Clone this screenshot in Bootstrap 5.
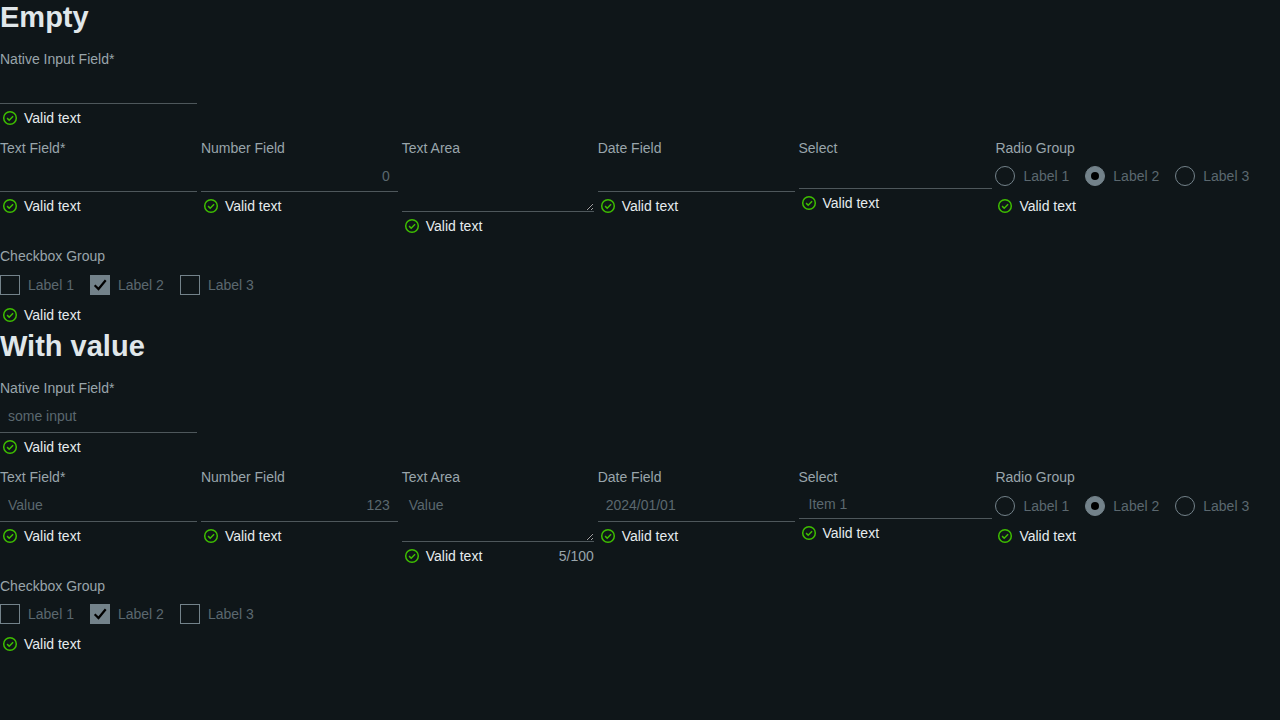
<!DOCTYPE html>
<html lang="en" data-bs-theme="dark">
<head>
<meta charset="utf-8">
<title>Form fields</title>
<link rel="stylesheet" href="https://cdn.jsdelivr.net/npm/bootstrap@5.3.0/dist/css/bootstrap.min.css">
<style>
body{background:#0f1619;font:14px/18px "Liberation Sans",Arial,sans-serif;color:#99a5ab}
.form-part{height:329.49px}
.form-part h1{font-size:29px;line-height:34px;font-weight:700;color:#e0e7ea;margin:0 0 15.5px}
.fields{gap:3.89px}
.first-field{height:89px}
.main-fields{height:108.6px}
.field-label{display:block;height:18px;white-space:nowrap}
.form-control,.form-control:disabled{display:block;width:197px;height:35.6px;min-height:0;padding:10px 8px 6.6px;border:0;border-bottom:1px solid #4e575b;border-radius:0;background:transparent;color:#5b686f;font:inherit;line-height:18px;opacity:1}
.first-field .form-control{height:36.5px;padding-bottom:7.5px}
.first-field .helper{margin-top:3.5px}
textarea.form-control,textarea.form-control:disabled{width:192px;height:55.6px;padding:10px 7px 8px;color-scheme:dark;resize:both}
.select-box{width:193px;height:32.6px;padding:9px 10px 0;border-bottom:1px solid #4e575b;color:#5b686f}
.helper{height:20px;line-height:20px;margin-top:4px;color:#e6ecee;white-space:nowrap}
.helper svg{width:20px;height:20px;margin-right:4px;flex:none}
.counter{color:#99a5ab}
.choices{gap:16px;margin-top:9.6px;height:20px;line-height:20px;color:#5b686f;white-space:nowrap}
.choices+.helper{margin-top:10px}
.choice{gap:8px;width:73.95px}
.mark-box{width:20px;height:20px;flex:none;border:1px solid #73828a}
.mark-box svg{display:block;width:18px;height:18px}
.round{border-radius:50%}
.picked{background:#73828a}
</style>
</head>
<body>
<svg class="d-none"><symbol id="ok" viewBox="0 0 20 20"><circle cx="10" cy="10" r="6.3" fill="none" stroke="#3ebe00" stroke-width="1.5"/><path d="M7.1 10.1 9.2 12.2 13.1 8.2" fill="none" stroke="#3ebe00" stroke-width="1.5"/></symbol></svg>

<section class="form-part">
  <h1>Empty</h1>
  <div class="first-field"><label class="field-label">Native Input Field*</label><input class="form-control" disabled><div class="helper d-flex"><svg><use href="#ok"/></svg>Valid text</div></div>
  <div class="fields main-fields d-flex align-items-start">
    <div><label class="field-label">Text Field*</label><input class="form-control" disabled><div class="helper d-flex"><svg><use href="#ok"/></svg>Valid text</div></div>
    <div><label class="field-label">Number Field</label><input class="form-control text-end" inputmode="numeric" value="0" disabled><div class="helper d-flex"><svg><use href="#ok"/></svg>Valid text</div></div>
    <div><label class="field-label">Text Area</label><textarea class="form-control" disabled></textarea><div class="helper d-flex"><svg><use href="#ok"/></svg>Valid text</div></div>
    <div><label class="field-label">Date Field</label><input class="form-control" disabled><div class="helper d-flex"><svg><use href="#ok"/></svg>Valid text</div></div>
    <div><label class="field-label">Select</label><div class="select-box"></div><div class="helper d-flex"><svg><use href="#ok"/></svg>Valid text</div></div>
    <div><label class="field-label">Radio Group</label>
      <div class="choices d-flex"><div class="choice d-flex"><span class="mark-box round"></span>Label 1</div><div class="choice d-flex"><span class="mark-box round picked"><svg viewBox="0 0 18 18"><circle cx="9" cy="9" r="4"/></svg></span>Label 2</div><div class="choice d-flex"><span class="mark-box round"></span>Label 3</div></div>
      <div class="helper d-flex"><svg><use href="#ok"/></svg>Valid text</div></div>
  </div>
  <div><label class="field-label">Checkbox Group</label>
    <div class="choices d-flex"><div class="choice d-flex"><span class="mark-box"></span>Label 1</div><div class="choice d-flex"><span class="mark-box picked"><svg viewBox="0 0 18 18"><path d="M3.7 9.2 7.5 13 14.7 4.2" fill="none" stroke="#000" stroke-width="2.2"/></svg></span>Label 2</div><div class="choice d-flex"><span class="mark-box"></span>Label 3</div></div>
    <div class="helper d-flex"><svg><use href="#ok"/></svg>Valid text</div></div>
</section>

<section class="form-part">
  <h1>With value</h1>
  <div class="first-field"><label class="field-label">Native Input Field*</label><input class="form-control" value="some input" disabled><div class="helper d-flex"><svg><use href="#ok"/></svg>Valid text</div></div>
  <div class="fields main-fields d-flex align-items-start">
    <div><label class="field-label">Text Field*</label><input class="form-control" value="Value" disabled><div class="helper d-flex"><svg><use href="#ok"/></svg>Valid text</div></div>
    <div><label class="field-label">Number Field</label><input class="form-control text-end" inputmode="numeric" value="123" disabled><div class="helper d-flex"><svg><use href="#ok"/></svg>Valid text</div></div>
    <div><label class="field-label">Text Area</label><textarea class="form-control" disabled>Value</textarea><div class="helper d-flex"><svg><use href="#ok"/></svg>Valid text<span class="counter ms-auto">5/100</span></div></div>
    <div><label class="field-label">Date Field</label><input class="form-control" value="2024/01/01" disabled><div class="helper d-flex"><svg><use href="#ok"/></svg>Valid text</div></div>
    <div><label class="field-label">Select</label><div class="select-box">Item 1</div><div class="helper d-flex"><svg><use href="#ok"/></svg>Valid text</div></div>
    <div><label class="field-label">Radio Group</label>
      <div class="choices d-flex"><div class="choice d-flex"><span class="mark-box round"></span>Label 1</div><div class="choice d-flex"><span class="mark-box round picked"><svg viewBox="0 0 18 18"><circle cx="9" cy="9" r="4"/></svg></span>Label 2</div><div class="choice d-flex"><span class="mark-box round"></span>Label 3</div></div>
      <div class="helper d-flex"><svg><use href="#ok"/></svg>Valid text</div></div>
  </div>
  <div><label class="field-label">Checkbox Group</label>
    <div class="choices d-flex"><div class="choice d-flex"><span class="mark-box"></span>Label 1</div><div class="choice d-flex"><span class="mark-box picked"><svg viewBox="0 0 18 18"><path d="M3.7 9.2 7.5 13 14.7 4.2" fill="none" stroke="#000" stroke-width="2.2"/></svg></span>Label 2</div><div class="choice d-flex"><span class="mark-box"></span>Label 3</div></div>
    <div class="helper d-flex"><svg><use href="#ok"/></svg>Valid text</div></div>
</section>
<script src="https://cdn.jsdelivr.net/npm/bootstrap@5.3.0/dist/js/bootstrap.bundle.min.js"></script>
</body>
</html>
